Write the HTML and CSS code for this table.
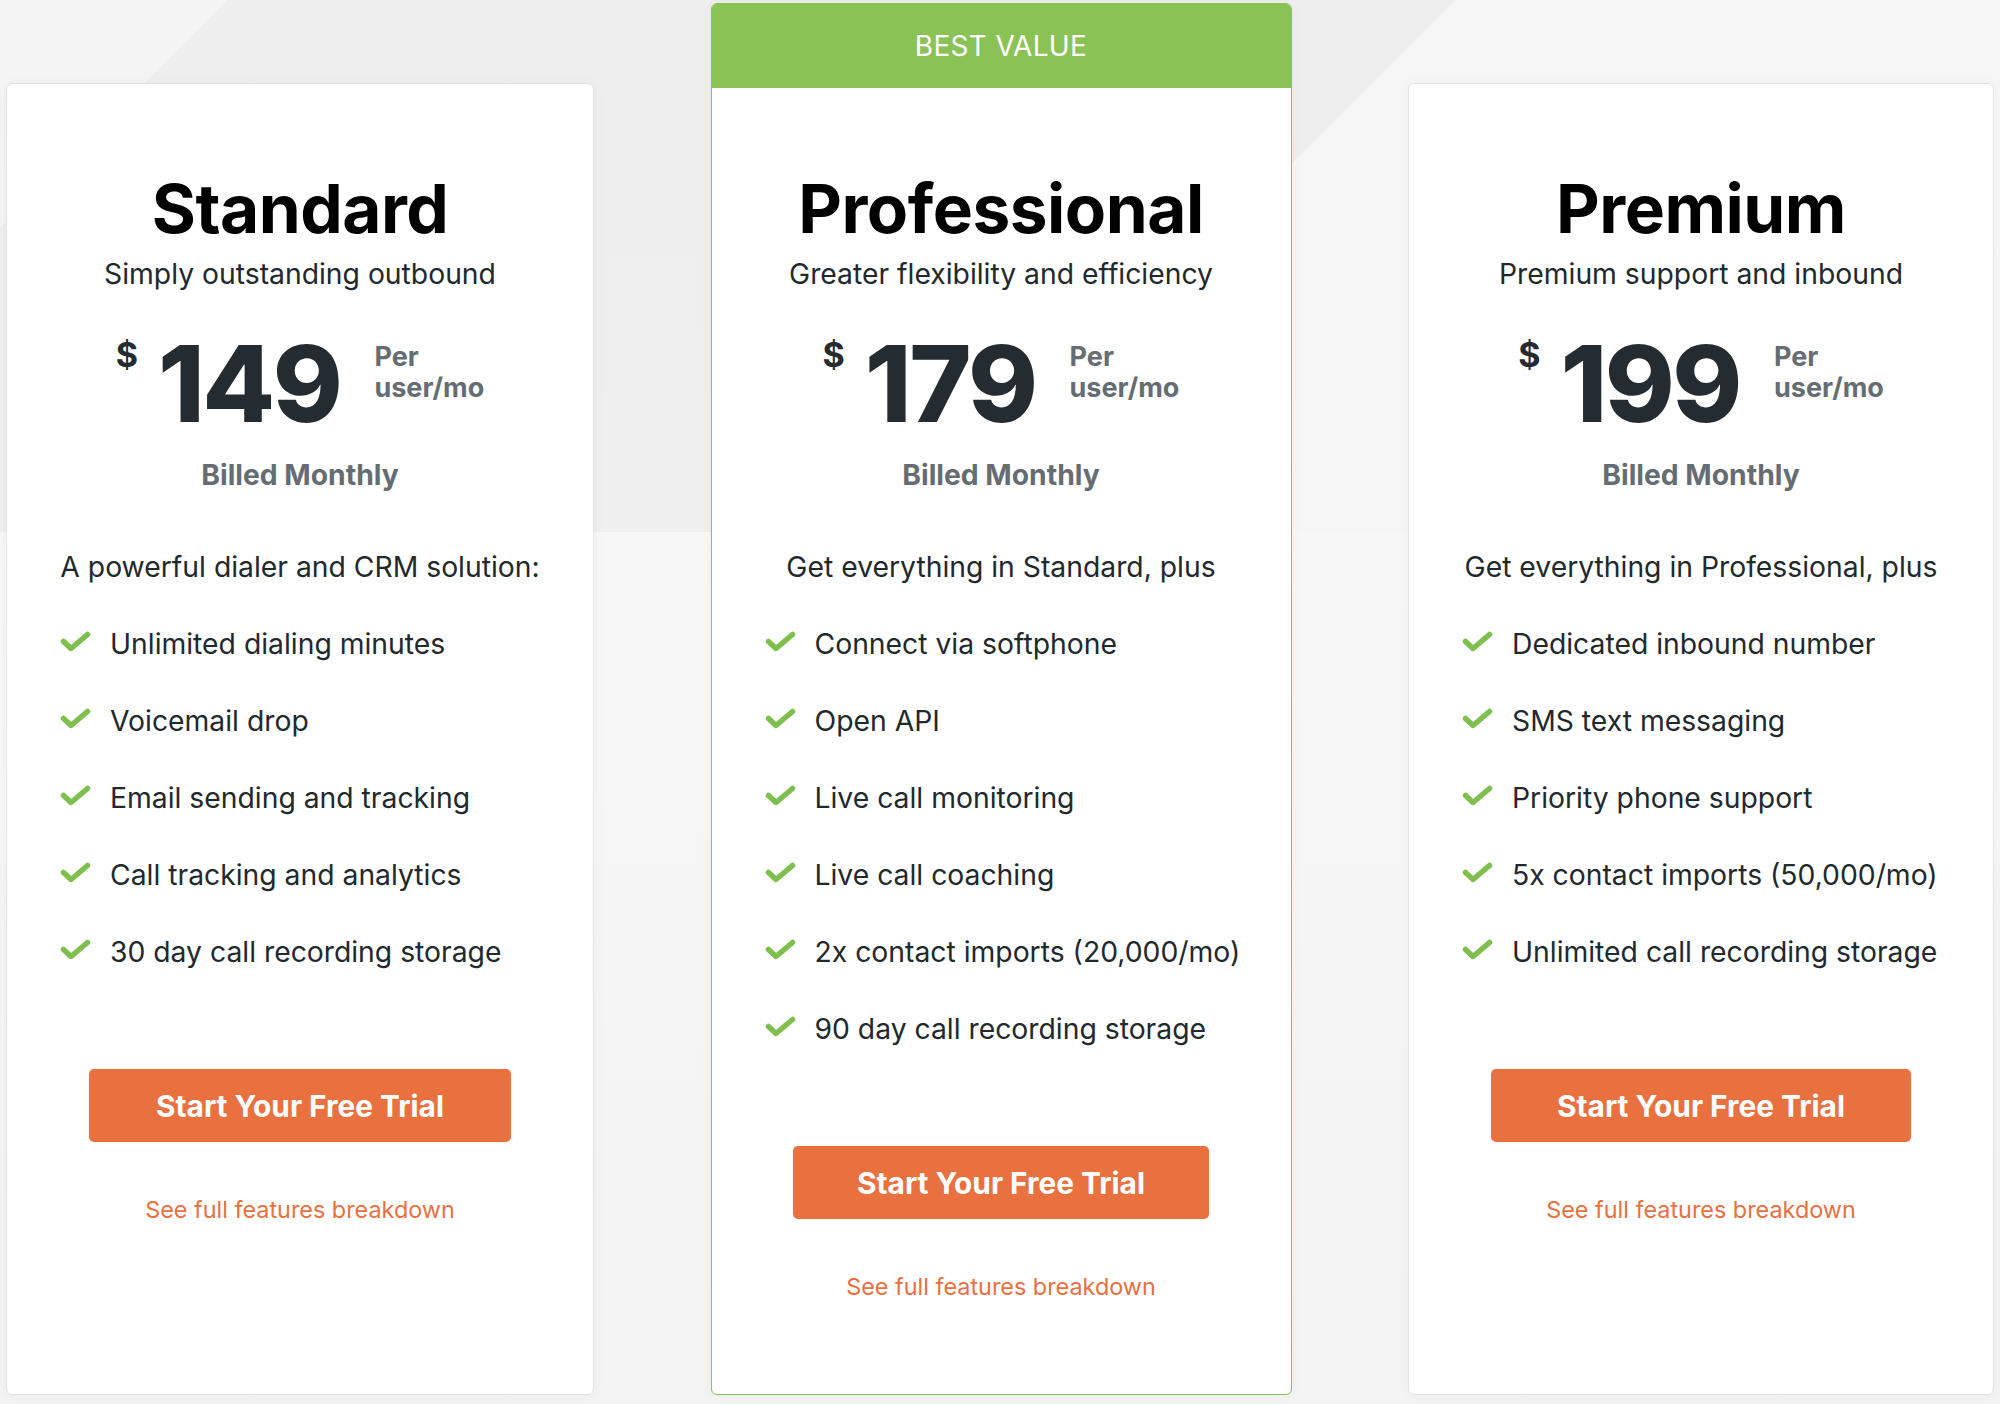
FILE: index.html
```html
<!DOCTYPE html>
<html lang="en">
<head>
<meta charset="utf-8">
<title>Pricing</title>
<link rel="stylesheet" href="styles.css">
</head>
<body>
<div class="plans">
  <div class="card">
    <div class="card-body">
      <h2 class="plan-name">Standard</h2>
      <p class="plan-tag">Simply outstanding outbound</p>
      <div class="price">
        <span class="cur">$</span>
        <span class="amount">149</span>
        <span class="per">Per<br>user/mo</span>
      </div>
      <p class="billed">Billed Monthly</p>
      <p class="intro">A powerful dialer and CRM solution:</p>
      <ul class="features">
        <li><svg class="check" viewBox="0 0 31 21"><polyline points="3.5,10.5 11,17.5 27.5,3.5"/></svg>Unlimited dialing minutes</li>
        <li><svg class="check" viewBox="0 0 31 21"><polyline points="3.5,10.5 11,17.5 27.5,3.5"/></svg>Voicemail drop</li>
        <li><svg class="check" viewBox="0 0 31 21"><polyline points="3.5,10.5 11,17.5 27.5,3.5"/></svg>Email sending and tracking</li>
        <li><svg class="check" viewBox="0 0 31 21"><polyline points="3.5,10.5 11,17.5 27.5,3.5"/></svg>Call tracking and analytics</li>
        <li><svg class="check" viewBox="0 0 31 21"><polyline points="3.5,10.5 11,17.5 27.5,3.5"/></svg>30 day call recording storage</li>
      </ul>
      <a class="btn" href="#">Start Your Free Trial</a>
      <a class="more" href="#">See full features breakdown</a>
    </div>
  </div>

  <div class="card featured">
    <div class="badge">BEST VALUE</div>
    <div class="card-body">
      <h2 class="plan-name">Professional</h2>
      <p class="plan-tag">Greater flexibility and efficiency</p>
      <div class="price">
        <span class="cur">$</span>
        <span class="amount">179</span>
        <span class="per">Per<br>user/mo</span>
      </div>
      <p class="billed">Billed Monthly</p>
      <p class="intro">Get everything in Standard, plus</p>
      <ul class="features">
        <li><svg class="check" viewBox="0 0 31 21"><polyline points="3.5,10.5 11,17.5 27.5,3.5"/></svg>Connect via softphone</li>
        <li><svg class="check" viewBox="0 0 31 21"><polyline points="3.5,10.5 11,17.5 27.5,3.5"/></svg>Open API</li>
        <li><svg class="check" viewBox="0 0 31 21"><polyline points="3.5,10.5 11,17.5 27.5,3.5"/></svg>Live call monitoring</li>
        <li><svg class="check" viewBox="0 0 31 21"><polyline points="3.5,10.5 11,17.5 27.5,3.5"/></svg>Live call coaching</li>
        <li><svg class="check" viewBox="0 0 31 21"><polyline points="3.5,10.5 11,17.5 27.5,3.5"/></svg>2x contact imports (20,000/mo)</li>
        <li><svg class="check" viewBox="0 0 31 21"><polyline points="3.5,10.5 11,17.5 27.5,3.5"/></svg>90 day call recording storage</li>
      </ul>
      <a class="btn" href="#">Start Your Free Trial</a>
      <a class="more" href="#">See full features breakdown</a>
    </div>
  </div>

  <div class="card">
    <div class="card-body">
      <h2 class="plan-name">Premium</h2>
      <p class="plan-tag">Premium support and inbound</p>
      <div class="price">
        <span class="cur">$</span>
        <span class="amount">199</span>
        <span class="per">Per<br>user/mo</span>
      </div>
      <p class="billed">Billed Monthly</p>
      <p class="intro">Get everything in Professional, plus</p>
      <ul class="features">
        <li><svg class="check" viewBox="0 0 31 21"><polyline points="3.5,10.5 11,17.5 27.5,3.5"/></svg>Dedicated inbound number</li>
        <li><svg class="check" viewBox="0 0 31 21"><polyline points="3.5,10.5 11,17.5 27.5,3.5"/></svg>SMS text messaging</li>
        <li><svg class="check" viewBox="0 0 31 21"><polyline points="3.5,10.5 11,17.5 27.5,3.5"/></svg>Priority phone support</li>
        <li><svg class="check" viewBox="0 0 31 21"><polyline points="3.5,10.5 11,17.5 27.5,3.5"/></svg>5x contact imports (50,000/mo)</li>
        <li><svg class="check" viewBox="0 0 31 21"><polyline points="3.5,10.5 11,17.5 27.5,3.5"/></svg>Unlimited call recording storage</li>
      </ul>
      <a class="btn" href="#">Start Your Free Trial</a>
      <a class="more" href="#">See full features breakdown</a>
    </div>
  </div>
</div>
</body>
</html>
```

FILE: styles.css
```css
html, body {
  margin: 0;
  padding: 0;
}

body {
  width: 2000px;
  height: 1404px;
  overflow: hidden;
  font-family: Inter, "Noto Sans", sans-serif;
  color: #22292d;
  background:
    linear-gradient(135deg, rgba(255,255,255,0) 57.5%, rgba(255,255,255,0.45) 57.5%) 0 0 / 2000px 532px no-repeat,
    linear-gradient(135deg, rgba(255,255,255,0.35) 9%, rgba(255,255,255,0) 9%) 0 0 / 2000px 532px no-repeat,
    linear-gradient(to bottom, #eeeeee 0, #efefef 532px, #f7f7f7 532px, #f3f3f3 100%);
}

.plans {
  display: grid;
  grid-template-columns: 588px 581px 586px;
  column-gap: 116.5px;
  padding: 3px 6px 0;
  height: 1395px;
  box-sizing: border-box;
}

.card {
  margin-top: 80px;
  background: #ffffff;
  border: 1px solid #e3e3e3;
  border-radius: 6px;
  box-shadow: 0 0 14px rgba(0, 0, 0, 0.035);
  display: flex;
  flex-direction: column;
  overflow: hidden;
}

.card.featured {
  margin-top: 0;
  border-color: #8bc255;
}

.badge {
  height: 84px;
  background: #8bc255;
  color: #ffffff;
  font-size: 28px;
  font-weight: 400;
  letter-spacing: 0.3px;
  display: flex;
  align-items: center;
  justify-content: center;
}

.card-body {
  display: flex;
  flex-direction: column;
  align-items: center;
  text-align: center;
  padding-top: 85px;
}

.featured .card-body {
  padding-top: 81px;
}

.plan-name {
  margin: 0;
  font-size: 67.5px;
  line-height: 80px;
  font-weight: 700;
  color: #000000;
  letter-spacing: -0.5px;
}

.plan-tag {
  margin: 7px 0 0;
  font-size: 28.3px;
  line-height: 36px;
  color: #22292d;
}

.price {
  margin-top: 39px;
  display: flex;
  align-items: flex-start;
  justify-content: center;
  color: #252c31;
}

.cur {
  font-size: 34px;
  line-height: 34px;
  font-weight: 700;
  margin-top: 7px;
  margin-right: 20px;
}

.amount {
  font-size: 106px;
  line-height: 106px;
  font-weight: 800;
  letter-spacing: -2.5px;
}

.per {
  margin-left: 34px;
  margin-top: 10px;
  font-size: 27px;
  line-height: 31px;
  font-weight: 700;
  color: #656d72;
  text-align: left;
}

.billed {
  margin: 21px 0 0;
  font-size: 28.3px;
  line-height: 34px;
  font-weight: 700;
  color: #656d72;
}

.intro {
  margin: 57px 0 0;
  font-size: 28.3px;
  line-height: 36px;
}

.features {
  list-style: none;
  margin: 0;
  padding: 0 0 0 53px;
  align-self: stretch;
  text-align: left;
}

.features li {
  margin-top: 41px;
  font-size: 28.3px;
  line-height: 36px;
  display: flex;
  align-items: center;
  white-space: nowrap;
}

.check {
  width: 31px;
  height: 21px;
  margin-right: 19px;
  flex: none;
  position: relative;
  top: -3px;
}

.check polyline {
  fill: none;
  stroke: #7fbf4d;
  stroke-width: 5.5;
  stroke-linecap: round;
  stroke-linejoin: round;
}

.btn {
  margin-top: 99px;
  width: 72%;
  height: 73px;
  border-radius: 5px;
  background: #e8713f;
  color: #ffffff;
  text-decoration: none;
  font-size: 29.8px;
  font-weight: 700;
  display: flex;
  align-items: center;
  justify-content: center;
}

.more {
  margin-top: 52px;
  font-size: 23.4px;
  line-height: 32px;
  color: #e8713f;
  text-decoration: none;
}
```
